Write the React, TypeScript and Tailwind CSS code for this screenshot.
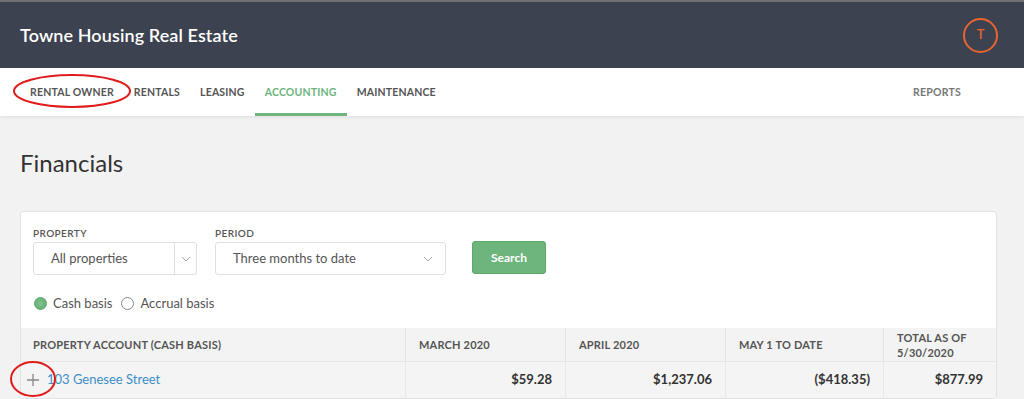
import React from 'react';

const navItems = ['Rental owner', 'Rentals', 'Leasing', 'Accounting', 'Maintenance'];

function Chevron() {
  return (
    <svg width="10" height="6" viewBox="0 0 10 6" fill="none" className="text-[#aaaaaa]">
      <path d="M1 1l4 4 4-4" stroke="currentColor" strokeWidth="1" />
    </svg>
  );
}

export default function App() {
  return (
    <div className="relative min-h-[399px] bg-[#f2f2f2] font-['Lato',sans-serif] text-[#333]">
      {/* top bar */}
      <header className="h-[68px] bg-[#3c4250] border-t-2 border-[#707070] flex items-center justify-between pl-5 pr-[26px]">
        <h1 className="text-white text-[18px] font-semibold tracking-[0.1px]">Towne Housing Real Estate</h1>
        <div className="w-[35px] h-[35px] rounded-full border-2 border-[#e8652e] flex items-center justify-center text-[#e8652e] text-[13px] font-semibold">
          T
        </div>
      </header>

      {/* nav */}
      <nav className="h-12 bg-white flex items-stretch justify-between pl-5 pr-[63px] shadow-[0_2px_3px_rgba(0,0,0,0.06)]">
        <div className="flex items-stretch">
          {navItems.map((item) => (
            <div
              key={item}
              className={
                'px-[10px] pt-[4px] flex items-center text-[10.5px] font-bold uppercase tracking-[0.18px] border-b-[3px] ' +
                (item === 'Accounting' ? 'text-[#6db57c] border-[#6db57c]' : 'text-[#555] border-transparent')
              }
            >
              {item}
            </div>
          ))}
        </div>
        <div className="flex items-center pt-[2px] text-[10.5px] font-bold uppercase tracking-[0.25px] text-[#777]">Reports</div>
      </nav>

      <main className="px-5">
        <h2 className="pt-[32px] pb-[33px] text-[24px] leading-[30px] font-normal text-[#333]">Financials</h2>

        <div className="w-[977px] bg-white border border-[#e2e2e2] rounded-[3px]">
          <div className="pt-[15px] px-[12px] flex items-start gap-[18px]">
            <div>
              <div className="text-[10px] font-semibold uppercase tracking-[0.4px] text-[#555] mb-[3px] leading-[12px]">Property</div>
              <div className="w-[164px] h-[33px] border border-[#e0e0e0] rounded-[3px] flex items-stretch">
                <div className="flex-1 flex items-center pl-[17px] text-[13px] text-[#555]">All properties</div>
                <div className="w-[22px] border-l border-[#e0e0e0] flex items-center justify-center">
                  <Chevron />
                </div>
              </div>
            </div>
            <div>
              <div className="text-[10px] font-semibold uppercase tracking-[0.4px] text-[#555] mb-[3px] leading-[12px]">Period</div>
              <div className="w-[231px] h-[33px] border border-[#e0e0e0] rounded-[3px] flex items-center justify-between pl-[17px] pr-[12px]">
                <span className="text-[13px] text-[#555]">Three months to date</span>
                <Chevron />
              </div>
            </div>
            <button className="ml-[8px] mt-[14px] w-[74px] h-[33px] bg-[#6db57c] border border-[#5ea86d] rounded-[3px] text-white text-[12px] font-bold">
              Search
            </button>
          </div>

          <div className="px-[13px] pt-[4px] h-[53px] flex items-center gap-[6px] text-[13px] text-[#555]">
            <span className="w-[13px] h-[13px] rounded-full bg-[#6db57c] border border-[#5ea86d] flex items-center justify-center">
              <span className="w-[5px] h-[5px] rounded-full bg-[#7fc08c]" />
            </span>
            <span>Cash basis</span>
            <span className="ml-[3px] w-[13px] h-[13px] rounded-full border border-[#888]" />
            <span>Accrual basis</span>
          </div>

          <div className="flex bg-[#f3f3f3] border-b border-[#e6e6e6] text-[11px] font-bold uppercase tracking-[0.2px] text-[#555] leading-[15px]">
            <div className="w-[385px] h-[33px] flex items-center pl-[12px] border-r border-[#e3e3e3]">Property account (cash basis)</div>
            <div className="w-[160px] flex items-center pl-[13px] border-r border-[#e3e3e3]">March 2020</div>
            <div className="w-[160px] flex items-center pl-[13px] border-r border-[#e3e3e3]">April 2020</div>
            <div className="w-[158px] flex items-center pl-[13px] border-r border-[#e3e3e3]">May 1 to date</div>
            <div className="flex-1 flex items-center pl-[13px]">Total as of<br />5/30/2020</div>
          </div>

          <div className="flex bg-[#f4f4f4] h-[36px] text-[13px] font-bold text-[#333]">
            <div className="w-[385px] flex items-center pl-[6px] gap-[8px] border-r border-[#e8e8e8]">
              <svg width="12" height="12" viewBox="0 0 12 12">
                <path d="M6 0v12M0 6h12" stroke="#888" strokeWidth="1.3" />
              </svg>
              <span className="font-normal text-[#3b8fcb]">103 Genesee Street</span>
            </div>
            <div className="w-[160px] flex items-center justify-end pr-[13px] border-r border-[#e8e8e8]">$59.28</div>
            <div className="w-[160px] flex items-center justify-end pr-[13px] border-r border-[#e8e8e8]">$1,237.06</div>
            <div className="w-[158px] flex items-center justify-end pr-[13px] border-r border-[#e8e8e8]">($418.35)</div>
            <div className="flex-1 flex items-center justify-end pr-[13px]">$877.99</div>
          </div>
        </div>
      </main>

      {/* red annotation ellipses */}
      <svg className="absolute left-0 top-0 pointer-events-none" width="1024" height="399">
        <ellipse cx="72" cy="91" rx="58" ry="16" fill="none" stroke="#e01b1b" strokeWidth="2" />
        <ellipse cx="33" cy="379" rx="22" ry="17" fill="none" stroke="#e01b1b" strokeWidth="2" />
      </svg>
    </div>
  );
}
